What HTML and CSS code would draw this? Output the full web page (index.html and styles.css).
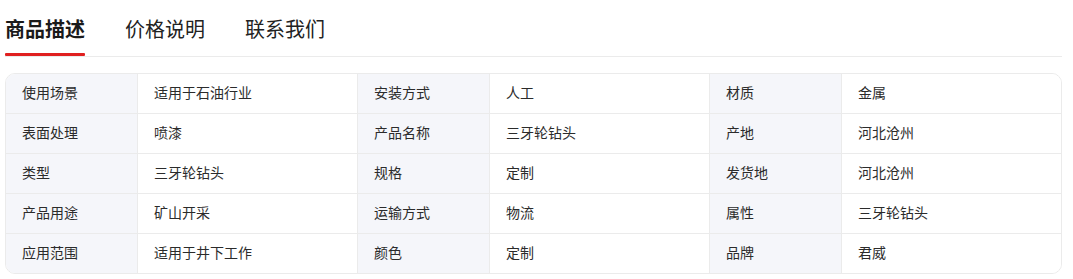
FILE: index.html
```html
<!DOCTYPE html>
<html lang="zh">
<head>
<meta charset="utf-8">
<link rel="stylesheet" href="styles.css">
</head>
<body>
<div class="wrap">
  <div class="tabs">
    <div class="tab active">商品描述</div>
    <div class="tab">价格说明</div>
    <div class="tab">联系我们</div>
  </div>
  <div class="table">
    <div class="row">
      <div class="k">使用场景</div><div class="v">适用于石油行业</div>
      <div class="k">安装方式</div><div class="v">人工</div>
      <div class="k">材质</div><div class="v">金属</div>
    </div>
    <div class="row">
      <div class="k">表面处理</div><div class="v">喷漆</div>
      <div class="k">产品名称</div><div class="v">三牙轮钻头</div>
      <div class="k">产地</div><div class="v">河北沧州</div>
    </div>
    <div class="row">
      <div class="k">类型</div><div class="v">三牙轮钻头</div>
      <div class="k">规格</div><div class="v">定制</div>
      <div class="k">发货地</div><div class="v">河北沧州</div>
    </div>
    <div class="row">
      <div class="k">产品用途</div><div class="v">矿山开采</div>
      <div class="k">运输方式</div><div class="v">物流</div>
      <div class="k">属性</div><div class="v">三牙轮钻头</div>
    </div>
    <div class="row">
      <div class="k">应用范围</div><div class="v">适用于井下工作</div>
      <div class="k">颜色</div><div class="v">定制</div>
      <div class="k">品牌</div><div class="v">君威</div>
    </div>
  </div>
</div>
</body>
</html>
```
FILE: styles.css
```css
html, body {
  margin: 0;
  padding: 0;
  background: #fff;
}
body {
  font-family: "Noto Sans CJK SC", "Noto Sans", sans-serif;
  color: #333;
}
.wrap {
  width: 1057px;
  margin-left: 5px;
}
.tabs {
  display: flex;
  gap: 40px;
  height: 56px;
  border-bottom: 1px solid #ebebeb;
}
.tab {
  font-size: 20px;
  line-height: 28px;
  padding-top: 15px;
  color: #222;
  height: 40px;
  box-sizing: border-box;
  width: 80px;
  white-space: nowrap;
}
.tab.active {
  font-weight: 700;
  color: #1a1a1a;
  height: 56px;
  position: relative;
}
.tab.active::after {
  content: "";
  position: absolute;
  left: 0;
  right: 0;
  top: 53px;
  height: 3px;
  background: #e02020;
  border-radius: 1px;
}
.table {
  margin-top: 16px;
  border: 1px solid #ebebeb;
  border-radius: 10px;
  overflow: hidden;
}
.row {
  display: grid;
  grid-template-columns: 132px 220px 132px 220px 132px 1fr;
  height: 40px;
  border-top: 1px solid #ebebeb;
  box-sizing: border-box;
}
.row:first-child {
  border-top: none;
  height: 39px;
}
.k, .v {
  display: flex;
  align-items: center;
  padding-left: 16px;
  padding-bottom: 3px;
  font-size: 14px;
  color: #2b2b2b;
  white-space: nowrap;
}
.k {
  background: #f5f6fa;
  border-right: 1px solid #ebebeb;
}
.v {
  background: #fff;
  border-right: 1px solid #ebebeb;
}
.v:last-child {
  border-right: none;
}
```
